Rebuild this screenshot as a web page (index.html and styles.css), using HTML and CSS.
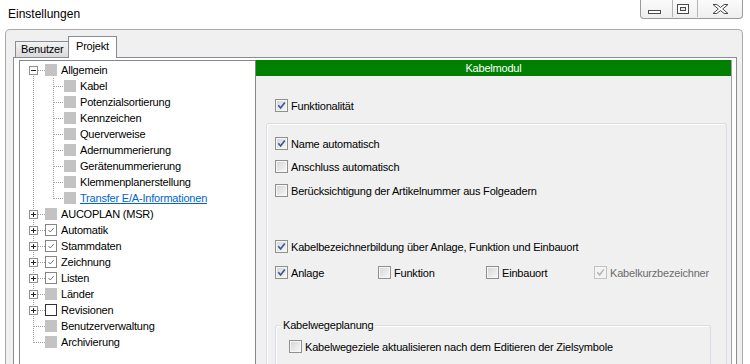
FILE: index.html
```html
<!DOCTYPE html>
<html lang="de">
<head>
<meta charset="utf-8">
<title>Einstellungen</title>
<link rel="stylesheet" href="styles.css">
</head>
<body>
<div class="titlebar">
  <div class="title">Einstellungen</div>
  <div class="winctl">
    <span class="wbtn wmin"><svg width="31" height="17" viewBox="0 0 31 17"><rect x="7.5" y="10.5" width="12" height="3" fill="#fff" stroke="#4a4a4a"/></svg></span>
    <span class="wbtn wmax"><svg width="24" height="17" viewBox="0 0 24 17"><rect x="4.5" y="4.5" width="11" height="9" fill="#fff" stroke="#4a4a4a"/><rect x="7.5" y="7.5" width="5" height="3" fill="#e8e8e8" stroke="#4a4a4a"/></svg></span>
    <span class="wbtn wclose"><svg width="44" height="17" viewBox="0 0 44 17"><polygon points="15,4.5 18.8,4.5 22.5,7.4 26.2,4.5 30,4.5 24.7,9 30,13.5 26.2,13.5 22.5,10.6 18.8,13.5 15,13.5 20.3,9" fill="#fff" stroke="#4a4a4a" stroke-linejoin="round"/></svg></span>
  </div>
</div>
<div class="frame">
  <div class="tabs">
    <div class="tab">Benutzer</div>
    <div class="tab active">Projekt</div>
  </div>
  <div class="page">
    <div class="tree">
      <div class="row r0 first"><span class="ln"><span class="exp minus"></span></span><span class="ico sq"></span><span class="tx">Allgemein</span></div>
      <div class="row r1"><span class="ln"></span><span class="ico sq"></span><span class="tx">Kabel</span></div>
      <div class="row r1"><span class="ln"></span><span class="ico sq"></span><span class="tx">Potenzialsortierung</span></div>
      <div class="row r1"><span class="ln"></span><span class="ico sq"></span><span class="tx">Kennzeichen</span></div>
      <div class="row r1"><span class="ln"></span><span class="ico sq"></span><span class="tx">Querverweise</span></div>
      <div class="row r1"><span class="ln"></span><span class="ico sq"></span><span class="tx">Adernummerierung</span></div>
      <div class="row r1"><span class="ln"></span><span class="ico sq"></span><span class="tx">Gerätenummerierung</span></div>
      <div class="row r1"><span class="ln"></span><span class="ico sq"></span><span class="tx">Klemmenplanerstellung</span></div>
      <div class="row r1 last"><span class="ln"></span><span class="ico sq"></span><span class="tx link">Transfer E/A-Informationen</span></div>
      <div class="row r0"><span class="ln"><span class="exp plus"></span></span><span class="ico sq"></span><span class="tx">AUCOPLAN (MSR)</span></div>
      <div class="row r0"><span class="ln"><span class="exp plus"></span></span><span class="ico tcb"><svg width="10" height="10" viewBox="0 0 10 10"><path d="M2.5 5 L4.3 7 L7.8 3" fill="none" stroke="#7a7a7a" stroke-width="1"/></svg></span><span class="tx">Automatik</span></div>
      <div class="row r0"><span class="ln"><span class="exp plus"></span></span><span class="ico tcb"><svg width="10" height="10" viewBox="0 0 10 10"><path d="M2.5 5 L4.3 7 L7.8 3" fill="none" stroke="#7a7a7a" stroke-width="1"/></svg></span><span class="tx">Stammdaten</span></div>
      <div class="row r0"><span class="ln"><span class="exp plus"></span></span><span class="ico tcb"><svg width="10" height="10" viewBox="0 0 10 10"><path d="M2.5 5 L4.3 7 L7.8 3" fill="none" stroke="#7a7a7a" stroke-width="1"/></svg></span><span class="tx">Zeichnung</span></div>
      <div class="row r0"><span class="ln"><span class="exp plus"></span></span><span class="ico tcb"><svg width="10" height="10" viewBox="0 0 10 10"><path d="M2.5 5 L4.3 7 L7.8 3" fill="none" stroke="#7a7a7a" stroke-width="1"/></svg></span><span class="tx">Listen</span></div>
      <div class="row r0"><span class="ln"><span class="exp plus"></span></span><span class="ico sq"></span><span class="tx">Länder</span></div>
      <div class="row r0"><span class="ln"><span class="exp plus"></span></span><span class="ico tcb empty"></span><span class="tx">Revisionen</span></div>
      <div class="row r0 noexp"><span class="ln"></span><span class="ico sq"></span><span class="tx">Benutzerverwaltung</span></div>
      <div class="row r0 noexp last"><span class="ln"></span><span class="ico sq"></span><span class="tx">Archivierung</span></div>
    </div>
    <div class="panel">
      <div class="head">Kabelmodul</div>
      <div class="opt top"><span class="cb on"><svg width="11" height="11" viewBox="0 0 11 11"><path d="M2.3 5.3 L4.6 8 L8.8 2.4" fill="none" stroke="#3d5894" stroke-width="1.7"/></svg></span><span>Funktionalität</span></div>
      <div class="group">
        <div class="opt o1"><span class="cb on"><svg width="11" height="11" viewBox="0 0 11 11"><path d="M2.3 5.3 L4.6 8 L8.8 2.4" fill="none" stroke="#3d5894" stroke-width="1.7"/></svg></span><span>Name automatisch</span></div>
        <div class="opt o2"><span class="cb"></span><span>Anschluss automatisch</span></div>
        <div class="opt o3"><span class="cb"></span><span>Berücksichtigung der Artikelnummer aus Folgeadern</span></div>
        <div class="opt o4"><span class="cb on"><svg width="11" height="11" viewBox="0 0 11 11"><path d="M2.3 5.3 L4.6 8 L8.8 2.4" fill="none" stroke="#3d5894" stroke-width="1.7"/></svg></span><span>Kabelbezeichnerbildung über Anlage, Funktion und Einbauort</span></div>
        <div class="optrow">
          <div class="opt c1"><span class="cb on"><svg width="11" height="11" viewBox="0 0 11 11"><path d="M2.3 5.3 L4.6 8 L8.8 2.4" fill="none" stroke="#3d5894" stroke-width="1.7"/></svg></span><span>Anlage</span></div>
          <div class="opt c2"><span class="cb"></span><span>Funktion</span></div>
          <div class="opt c3"><span class="cb"></span><span>Einbauort</span></div>
          <div class="opt dis"><span class="cb"><svg width="11" height="11" viewBox="0 0 11 11"><path d="M2.3 5.3 L4.6 8 L8.8 2.4" fill="none" stroke="#b4b4b4" stroke-width="1.5"/></svg></span><span>Kabelkurzbezeichner</span></div>
        </div>
        <fieldset class="sub">
          <legend>Kabelwegeplanung</legend>
          <div class="opt"><span class="cb"></span><span>Kabelwegeziele aktualisieren nach dem Editieren der Zielsymbole</span></div>
        </fieldset>
      </div>
    </div>
  </div>
</div>
</body>
</html>
```

FILE: styles.css
```css
html, body {
  margin: 0;
  padding: 0;
}
body {
  width: 750px;
  height: 364px;
  overflow: hidden;
  background: #fff;
  font-family: "Liberation Sans", Arial, sans-serif;
  font-size: 11px;
  letter-spacing: -0.2px;
  color: #000;
}

/* title bar */
.titlebar {
  height: 29px;
  display: flex;
  justify-content: space-between;
  align-items: flex-start;
}
.title {
  padding-left: 8px;
  padding-top: 6px;
  font-size: 12px;
  line-height: 16px;
  letter-spacing: 0;
  color: #000;
}
.winctl {
  margin-right: 7px;
  display: flex;
  height: 18px;
  border: 1px solid #9a9a9a;
  border-top: 0;
  border-radius: 0 0 4px 4px;
  background: linear-gradient(#fbfbfb, #eeeeee);
  overflow: hidden;
}
.wbtn {
  display: block;
  height: 17px;
}
.wbtn svg { display: block; }
.wmin { width: 31px; border-right: 1px solid #b5b5b5; }
.wmax { width: 24px; border-right: 1px solid #b5b5b5; }
.wclose { width: 44px; }

/* dialog frame */
.frame {
  margin-left: 5px;
  width: 738px;
  height: 335px;
  box-sizing: border-box;
  border: 1px solid #aaaaaa;
  border-bottom: 0;
  border-radius: 5px 5px 0 0;
  background: #f0f0f0;
  padding: 6px 6px 0 7px;
  overflow: hidden;
}
.tabs {
  display: flex;
  align-items: flex-end;
  height: 21px;
  padding-left: 2px;
}
.tab {
  height: 16px;
  box-sizing: border-box;
  border: 1px solid #898c95;
  border-bottom: 0;
  padding: 0 5px;
  line-height: 15px;
  width: 54px;
  background: linear-gradient(#f3f3f3, #e6e6e6 50%, #dadada);
}
.tab.active {
  position: relative;
  z-index: 1;
  height: 22px;
  width: 49px;
  margin-left: -1px;
  margin-bottom: -1px;
  padding: 1px 0 0 7px;
  line-height: 17px;
  background: #fff;
}
.page {
  display: flex;
  width: 724px;
  height: 307px;
  box-sizing: border-box;
  border: 1px solid #898c95;
  border-bottom: 0;
  background: #fff;
  padding: 2px 4px 0 5px;
}

/* tree */
.tree {
  width: 237px;
  height: 304px;
  box-sizing: border-box;
  border: 1px solid #828790;
  border-bottom: 0;
  background: #fff;
  padding-top: 1px;
  flex: none;
}
.row {
  display: flex;
  align-items: center;
  height: 16px;
  white-space: nowrap;
}
.ln {
  align-self: stretch;
  display: flex;
  align-items: center;
  flex: none;
  background-repeat: no-repeat;
}
.r0 .ln {
  width: 25px;
  background-image:
    repeating-linear-gradient(to right, #a0a0a0 0 1px, transparent 1px 2px),
    repeating-linear-gradient(to bottom, #a0a0a0 0 1px, transparent 1px 2px);
  background-position: 18px 8px, 13px 0;
  background-size: 7px 1px, 1px 16px;
}
.r0.first .ln {
  background-position: 18px 8px, 13px 8px;
  background-size: 7px 1px, 1px 8px;
}
.r0.noexp .ln {
  background-position: 14px 8px, 13px 0;
  background-size: 11px 1px, 1px 16px;
}
.r0.noexp.last .ln {
  background-size: 11px 1px, 1px 9px;
}
.r1 .ln {
  width: 44px;
  background-image:
    repeating-linear-gradient(to bottom, #a0a0a0 0 1px, transparent 1px 2px),
    repeating-linear-gradient(to bottom, #a0a0a0 0 1px, transparent 1px 2px),
    repeating-linear-gradient(to right, #a0a0a0 0 1px, transparent 1px 2px);
  background-position: 13px 0, 33px 0, 34px 8px;
  background-size: 1px 16px, 1px 16px, 9px 1px;
}
.r1.last .ln {
  background-size: 1px 16px, 1px 9px, 9px 1px;
}
.exp {
  width: 9px;
  height: 9px;
  box-sizing: border-box;
  margin-left: 9px;
  border: 1px solid #919191;
  background-color: #fff;
  background-repeat: no-repeat;
  background-position: center;
}
.exp.minus {
  background-image: linear-gradient(#222, #222);
  background-size: 5px 1px;
}
.exp.plus {
  background-image: linear-gradient(#222, #222), linear-gradient(#222, #222);
  background-size: 5px 1px, 1px 5px;
}
.ico {
  width: 12px;
  height: 12px;
  box-sizing: border-box;
  margin-right: 4px;
  flex: none;
}
.ico svg { display: block; margin: 0; }
.sq { background: #c3c3c3; }
.tcb {
  border: 1px solid #858585;
  background: #fff;
}
.tcb.empty { border-color: #333; }
.tx { line-height: 16px; }
.link {
  color: #0066cc;
  text-decoration: underline;
}

/* right panel */
.panel {
  width: 476px;
  height: 304px;
  box-sizing: border-box;
  border-right: 1px solid #a0a0a0;
  background: #f0f0f0;
  flex: none;
  overflow: hidden;
}
.head {
  height: 16px;
  line-height: 16px;
  background: #008000;
  color: #fff;
  text-align: center;
}
.opt {
  display: flex;
  align-items: center;
  height: 13px;
  white-space: nowrap;
}
.opt.top {
  margin: 23px 0 0 19px;
}
.cb {
  width: 13px;
  height: 13px;
  box-sizing: border-box;
  flex: none;
  margin-right: 3px;
  border: 1px solid #8e8f8f;
  background: linear-gradient(135deg, #d4d4d4, #f9f9f9);
  box-shadow: inset 0 0 0 1px #f6f6f6;
}
.cb svg { display: block; }
.dis { color: #6d6d6d; }
.dis .cb {
  border-color: #c2c2c2;
  background: #f4f4f4;
  box-shadow: none;
}
.group {
  margin: 11px 4px 0 10px;
  height: 241px;
  box-sizing: border-box;
  border: 1px solid #d5dfe5;
  border-bottom: 0;
  border-radius: 3px 3px 0 0;
  box-shadow: inset 1px 1px 0 #fff;
  padding: 13px 0 0 8px;
}
.o2 { margin-top: 10px; }
.o3 { margin-top: 11px; }
.o4 { margin-top: 43px; }
.optrow {
  display: flex;
  margin-top: 13px;
}
.c1 { width: 103px; }
.c2 { width: 108px; }
.c3 { width: 108px; }
.sub {
  margin: 40px 0 0 0;
  width: 436px;
  height: 45px;
  box-sizing: border-box;
  border: 1px solid #d5dfe5;
  border-bottom: 0;
  border-radius: 3px 3px 0 0;
  box-shadow: inset 1px 1px 0 #fff;
  padding: 8px 0 0 5px;
  min-inline-size: 0;
}
.sub legend {
  padding: 0 2px;
  line-height: 13px;
}
.sub .opt { margin-left: 8px; }
```
